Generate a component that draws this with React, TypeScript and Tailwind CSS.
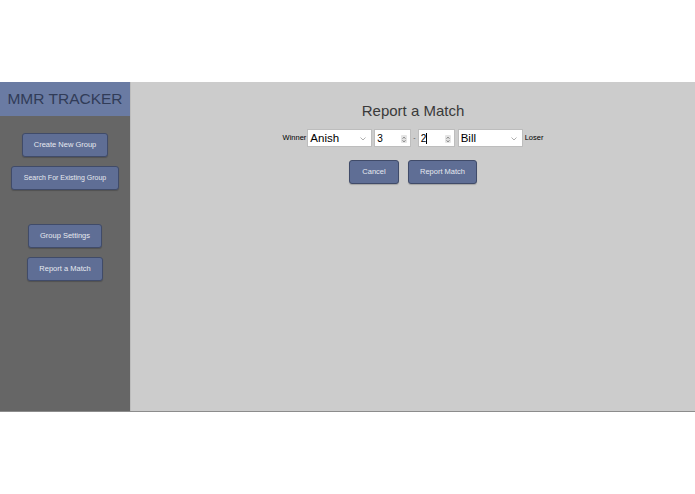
import React from "react";

const font = { fontFamily: '"Liberation Sans", Arial, sans-serif' };

function SideButton({ label, w, size = "text-[7.5px]" }: { label: string; w: string; size?: string }) {
  return (
    <button
      className={`${w} ${size} h-[24px] rounded-[3px] border border-[#404b69] bg-[#5f6e95] text-[#e6e9f0] shadow-[0_1px_1px_rgba(0,0,0,0.2)]`}
    >
      {label}
    </button>
  );
}

function Chevron() {
  return (
    <svg width="6" height="4" viewBox="0 0 6 4" className="absolute right-[5px] top-[7px]">
      <path d="M0.5 0.5 L3 3 L5.5 0.5" fill="none" stroke="#9a9a9a" strokeWidth="0.8" />
    </svg>
  );
}

function Spinner() {
  return (
    <span className="absolute right-[3px] top-[5px] flex h-[8px] w-[6px] flex-col items-center justify-center rounded-[1px] bg-[#e4e4e4]">
      <svg width="4" height="7" viewBox="0 0 4 7">
        <path d="M0.5 2.8 L2 1 L3.5 2.8" fill="none" stroke="#777" strokeWidth="0.8" />
        <path d="M0.5 4.2 L2 6 L3.5 4.2" fill="none" stroke="#777" strokeWidth="0.8" />
      </svg>
    </span>
  );
}

function Select({ value }: { value: string }) {
  return (
    <div className="relative h-[18px] w-[65px] border border-[#bdbdbd] bg-white pl-[2px] text-[11.5px] leading-[16px] text-black">
      {value}
      <Chevron />
    </div>
  );
}

function NumberBox({ value, caret }: { value: string; caret?: boolean }) {
  return (
    <div className="relative flex h-[18px] w-[37px] items-center border border-[#bdbdbd] bg-white pl-[2px] pt-[1px] text-[10px] text-black">
      {value}
      {caret && <span className="h-[11px] w-px bg-black" />}
      <Spinner />
    </div>
  );
}

export default function App() {
  return (
    <div className="h-[494px] w-full bg-white pt-[82px]" style={font}>
      <div className="flex h-[330px] border-b border-[#8c8c8c]">
        <aside className="flex w-[130px] flex-col bg-[#666666]">
          <div className="flex h-[34px] items-center justify-center bg-[#6a7ba3] text-[15.5px] text-[#313c58]">
            MMR TRACKER
          </div>
          <div className="flex flex-col items-center gap-[9px] pt-[17px]">
            <SideButton label="Create New Group" w="w-[86px]" />
            <SideButton label="Search For Existing Group" w="w-[108px]" size="text-[7px]" />
          </div>
          <div className="mt-[34px] flex flex-col items-center gap-[9px]">
            <SideButton label="Group Settings" w="w-[74px]" />
            <SideButton label="Report a Match" w="w-[76px]" />
          </div>
        </aside>
        <main className="flex flex-1 flex-col items-center border-l border-[#bdbdbd] bg-[#cccccc]">
          <h1 className="mt-[20px] text-[15px] leading-[18px] text-[#3a3a3a]">Report a Match</h1>
          <div className="mt-[9px] flex items-center">
            <span className="mr-[1px] text-[7.5px] text-black">Winner</span>
            <Select value="Anish" />
            <div className="ml-[2px]">
              <NumberBox value="3" />
            </div>
            <span className="mx-[2px] text-[7px] text-[#555]">-</span>
            <NumberBox value="2" caret />
            <div className="ml-[3px]">
              <Select value="Bill" />
            </div>
            <span className="ml-[2px] text-[7.5px] text-black">Loser</span>
          </div>
          <div className="mt-[13px] flex gap-[9px]">
            <SideButton label="Cancel" w="w-[50px]" />
            <SideButton label="Report Match" w="w-[69px]" />
          </div>
        </main>
      </div>
    </div>
  );
}
